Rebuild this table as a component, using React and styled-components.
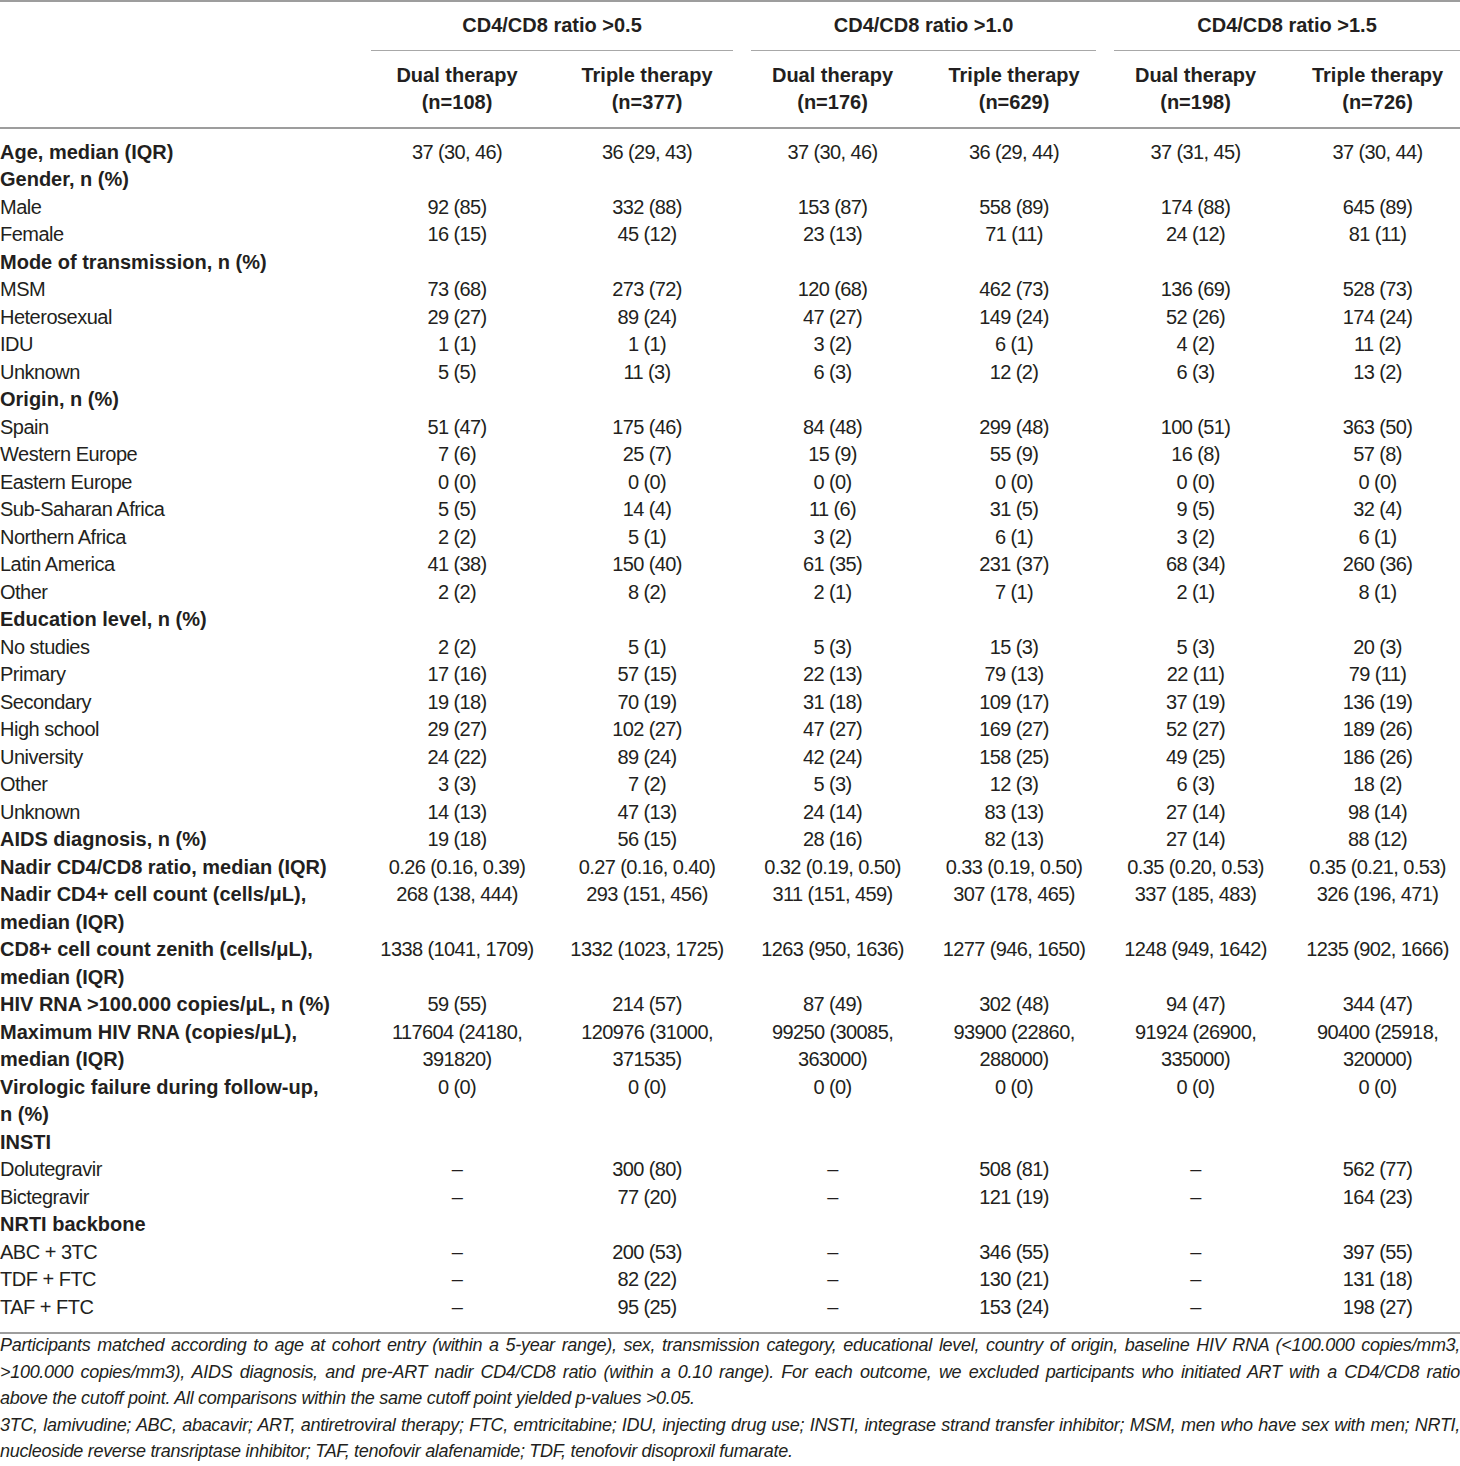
import styled, { createGlobalStyle } from 'styled-components';

const GlobalStyle = createGlobalStyle`
  html, body {
    margin: 0;
    padding: 0;
    background: #fff;
  }
  body {
    font-family: "Liberation Sans", Arial, sans-serif;
    color: #231f20;
  }
`;

const groups = ['CD4/CD8 ratio >0.5', 'CD4/CD8 ratio >1.0', 'CD4/CD8 ratio >1.5'];
const arms = [
  ['Dual therapy', '(n=108)'],
  ['Triple therapy', '(n=377)'],
  ['Dual therapy', '(n=176)'],
  ['Triple therapy', '(n=629)'],
  ['Dual therapy', '(n=198)'],
  ['Triple therapy', '(n=726)'],
];

const D = '–';
const zeros = ['0 (0)', '0 (0)', '0 (0)', '0 (0)', '0 (0)', '0 (0)'];

// label lines separated by "|"
const rows = [
  { label: 'Age, median (IQR)', bold: true, v: ['37 (30, 46)', '36 (29, 43)', '37 (30, 46)', '36 (29, 44)', '37 (31, 45)', '37 (30, 44)'] },
  { label: 'Gender, n (%)', bold: true },
  { label: 'Male', v: ['92 (85)', '332 (88)', '153 (87)', '558 (89)', '174 (88)', '645 (89)'] },
  { label: 'Female', v: ['16 (15)', '45 (12)', '23 (13)', '71 (11)', '24 (12)', '81 (11)'] },
  { label: 'Mode of transmission, n (%)', bold: true },
  { label: 'MSM', v: ['73 (68)', '273 (72)', '120 (68)', '462 (73)', '136 (69)', '528 (73)'] },
  { label: 'Heterosexual', v: ['29 (27)', '89 (24)', '47 (27)', '149 (24)', '52 (26)', '174 (24)'] },
  { label: 'IDU', v: ['1 (1)', '1 (1)', '3 (2)', '6 (1)', '4 (2)', '11 (2)'] },
  { label: 'Unknown', v: ['5 (5)', '11 (3)', '6 (3)', '12 (2)', '6 (3)', '13 (2)'] },
  { label: 'Origin, n (%)', bold: true },
  { label: 'Spain', v: ['51 (47)', '175 (46)', '84 (48)', '299 (48)', '100 (51)', '363 (50)'] },
  { label: 'Western Europe', v: ['7 (6)', '25 (7)', '15 (9)', '55 (9)', '16 (8)', '57 (8)'] },
  { label: 'Eastern Europe', v: zeros },
  { label: 'Sub-Saharan Africa', v: ['5 (5)', '14 (4)', '11 (6)', '31 (5)', '9 (5)', '32 (4)'] },
  { label: 'Northern Africa', v: ['2 (2)', '5 (1)', '3 (2)', '6 (1)', '3 (2)', '6 (1)'] },
  { label: 'Latin America', v: ['41 (38)', '150 (40)', '61 (35)', '231 (37)', '68 (34)', '260 (36)'] },
  { label: 'Other', v: ['2 (2)', '8 (2)', '2 (1)', '7 (1)', '2 (1)', '8 (1)'] },
  { label: 'Education level, n (%)', bold: true },
  { label: 'No studies', v: ['2 (2)', '5 (1)', '5 (3)', '15 (3)', '5 (3)', '20 (3)'] },
  { label: 'Primary', v: ['17 (16)', '57 (15)', '22 (13)', '79 (13)', '22 (11)', '79 (11)'] },
  { label: 'Secondary', v: ['19 (18)', '70 (19)', '31 (18)', '109 (17)', '37 (19)', '136 (19)'] },
  { label: 'High school', v: ['29 (27)', '102 (27)', '47 (27)', '169 (27)', '52 (27)', '189 (26)'] },
  { label: 'University', v: ['24 (22)', '89 (24)', '42 (24)', '158 (25)', '49 (25)', '186 (26)'] },
  { label: 'Other', v: ['3 (3)', '7 (2)', '5 (3)', '12 (3)', '6 (3)', '18 (2)'] },
  { label: 'Unknown', v: ['14 (13)', '47 (13)', '24 (14)', '83 (13)', '27 (14)', '98 (14)'] },
  { label: 'AIDS diagnosis, n (%)', bold: true, v: ['19 (18)', '56 (15)', '28 (16)', '82 (13)', '27 (14)', '88 (12)'] },
  { label: 'Nadir CD4/CD8 ratio, median (IQR)', bold: true, v: ['0.26 (0.16, 0.39)', '0.27 (0.16, 0.40)', '0.32 (0.19, 0.50)', '0.33 (0.19, 0.50)', '0.35 (0.20, 0.53)', '0.35 (0.21, 0.53)'] },
  { label: 'Nadir CD4+ cell count (cells/μL),|median (IQR)', bold: true, v: ['268 (138, 444)', '293 (151, 456)', '311 (151, 459)', '307 (178, 465)', '337 (185, 483)', '326 (196, 471)'] },
  { label: 'CD8+ cell count zenith (cells/μL),|median (IQR)', bold: true, v: ['1338 (1041, 1709)', '1332 (1023, 1725)', '1263 (950, 1636)', '1277 (946, 1650)', '1248 (949, 1642)', '1235 (902, 1666)'] },
  { label: 'HIV RNA >100.000 copies/μL, n (%)', bold: true, v: ['59 (55)', '214 (57)', '87 (49)', '302 (48)', '94 (47)', '344 (47)'] },
  { label: 'Maximum HIV RNA (copies/μL),|median (IQR)', bold: true, v: ['117604 (24180,|391820)', '120976 (31000,|371535)', '99250 (30085,|363000)', '93900 (22860,|288000)', '91924 (26900,|335000)', '90400 (25918,|320000)'] },
  { label: 'Virologic failure during follow-up,|n (%)', bold: true, v: zeros },
  { label: 'INSTI', bold: true },
  { label: 'Dolutegravir', v: [D, '300 (80)', D, '508 (81)', D, '562 (77)'] },
  { label: 'Bictegravir', v: [D, '77 (20)', D, '121 (19)', D, '164 (23)'] },
  { label: 'NRTI backbone', bold: true },
  { label: 'ABC + 3TC', v: [D, '200 (53)', D, '346 (55)', D, '397 (55)'] },
  { label: 'TDF + FTC', v: [D, '82 (22)', D, '130 (21)', D, '131 (18)'] },
  { label: 'TAF + FTC', v: [D, '95 (25)', D, '153 (24)', D, '198 (27)'] },
];

const notes = [
  { text: 'Participants matched according to age at cohort entry (within a 5-year range), sex, transmission category, educational level, country of origin, baseline HIV RNA (<100.000 copies/mm3,', full: true },
  { text: '>100.000 copies/mm3), AIDS diagnosis, and pre-ART nadir CD4/CD8 ratio (within a 0.10 range). For each outcome, we excluded participants who initiated ART with a CD4/CD8 ratio', full: true },
  { text: 'above the cutoff point. All comparisons within the same cutoff point yielded p-values >0.05.' },
  { text: '3TC, lamivudine; ABC, abacavir; ART, antiretroviral therapy; FTC, emtricitabine; IDU, injecting drug use; INSTI, integrase strand transfer inhibitor; MSM, men who have sex with men; NRTI,', full: true },
  { text: 'nucleoside reverse transriptase inhibitor; TAF, tenofovir alafenamide; TDF, tenofovir disoproxil fumarate.' },
];

const colWidths = [362, 190, 190, 181, 182, 181, 174];

const lines = (s) =>
  s.split('|').map((part, i) => (
    <span key={i}>
      {i > 0 && <br />}
      {part}
    </span>
  ));

const App = () => {
  return (
    <Page>
      <GlobalStyle />
      <Table>
        <colgroup>
          {colWidths.map((w, i) => (
            <col key={i} style={{ width: w }} />
          ))}
        </colgroup>
        <thead>
          <tr>
            <th />
            {groups.map((g, i) => (
              <GroupCell key={g} colSpan={2} $last={i === groups.length - 1}>
                <GroupTitle>{g}</GroupTitle>
              </GroupCell>
            ))}
          </tr>
          <ArmRow>
            <th />
            {arms.map(([name, n], i) => (
              <ArmCell key={i} $last={i === arms.length - 1}>
                {name}
                <br />
                {n}
              </ArmCell>
            ))}
          </ArmRow>
        </thead>
        <tbody>
          {rows.map((r, i) => (
            <BodyRow key={i}>
              <LabelCell $bold={r.bold}>{lines(r.label)}</LabelCell>
              {(r.v || ['', '', '', '', '', '']).map((v, j) => (
                <ValueCell key={j} $last={j === 5}>
                  {lines(v)}
                </ValueCell>
              ))}
            </BodyRow>
          ))}
        </tbody>
      </Table>
      <Notes>
        {notes.map((n, i) => (
          <NoteLine key={i} $full={n.full}>
            {n.text}
          </NoteLine>
        ))}
      </Notes>
    </Page>
  );
};

const Page = styled.div`
  width: 1460px;
  background: #fff;
`;

const Table = styled.table`
  width: 1460px;
  table-layout: fixed;
  border-collapse: collapse;
  border-top: 2px solid #9d9d9d;
  border-bottom: 2px solid #9d9d9d;
  font-size: 20px;
  line-height: 27.5px;
  th, td {
    padding: 0;
    vertical-align: top;
  }
`;

const GroupCell = styled.th`
  padding: 10px ${(p) => (p.$last ? '0' : '9px')} 0 9px !important;
  font-weight: 700;
  text-align: center;
`;

const GroupTitle = styled.div`
  padding-bottom: 10px;
  border-bottom: 1px solid #a8a8a8;
`;

const ArmRow = styled.tr`
  border-bottom: 2px solid #9d9d9d;
`;

const ArmCell = styled.th`
  padding: 11px ${(p) => (p.$last ? '0' : '9px')} 10px 9px !important;
  font-weight: 700;
  text-align: center;
  white-space: nowrap;
`;

const BodyRow = styled.tr`
  &:first-child td {
    padding-top: 10px;
  }
  &:last-child td {
    padding-bottom: 11px;
  }
`;

const LabelCell = styled.td`
  font-weight: ${(p) => (p.$bold ? 700 : 400)};
  letter-spacing: ${(p) => (p.$bold ? '0' : '-0.5px')};
  text-align: left;
  white-space: nowrap;
`;

const ValueCell = styled.td`
  padding-left: 9px !important;
  padding-right: ${(p) => (p.$last ? '0' : '9px')} !important;
  text-align: center;
  letter-spacing: -0.6px;
  white-space: nowrap;
`;

const Notes = styled.div`
  margin-top: -2px;
  font-size: 18px;
  line-height: 26.6px;
  font-style: italic;
  letter-spacing: -0.3px;
  color: #231f20;
`;

const NoteLine = styled.div`
  white-space: nowrap;
  text-align: ${(p) => (p.$full ? 'justify' : 'left')};
  text-align-last: ${(p) => (p.$full ? 'justify' : 'left')};
`;

export default App;
